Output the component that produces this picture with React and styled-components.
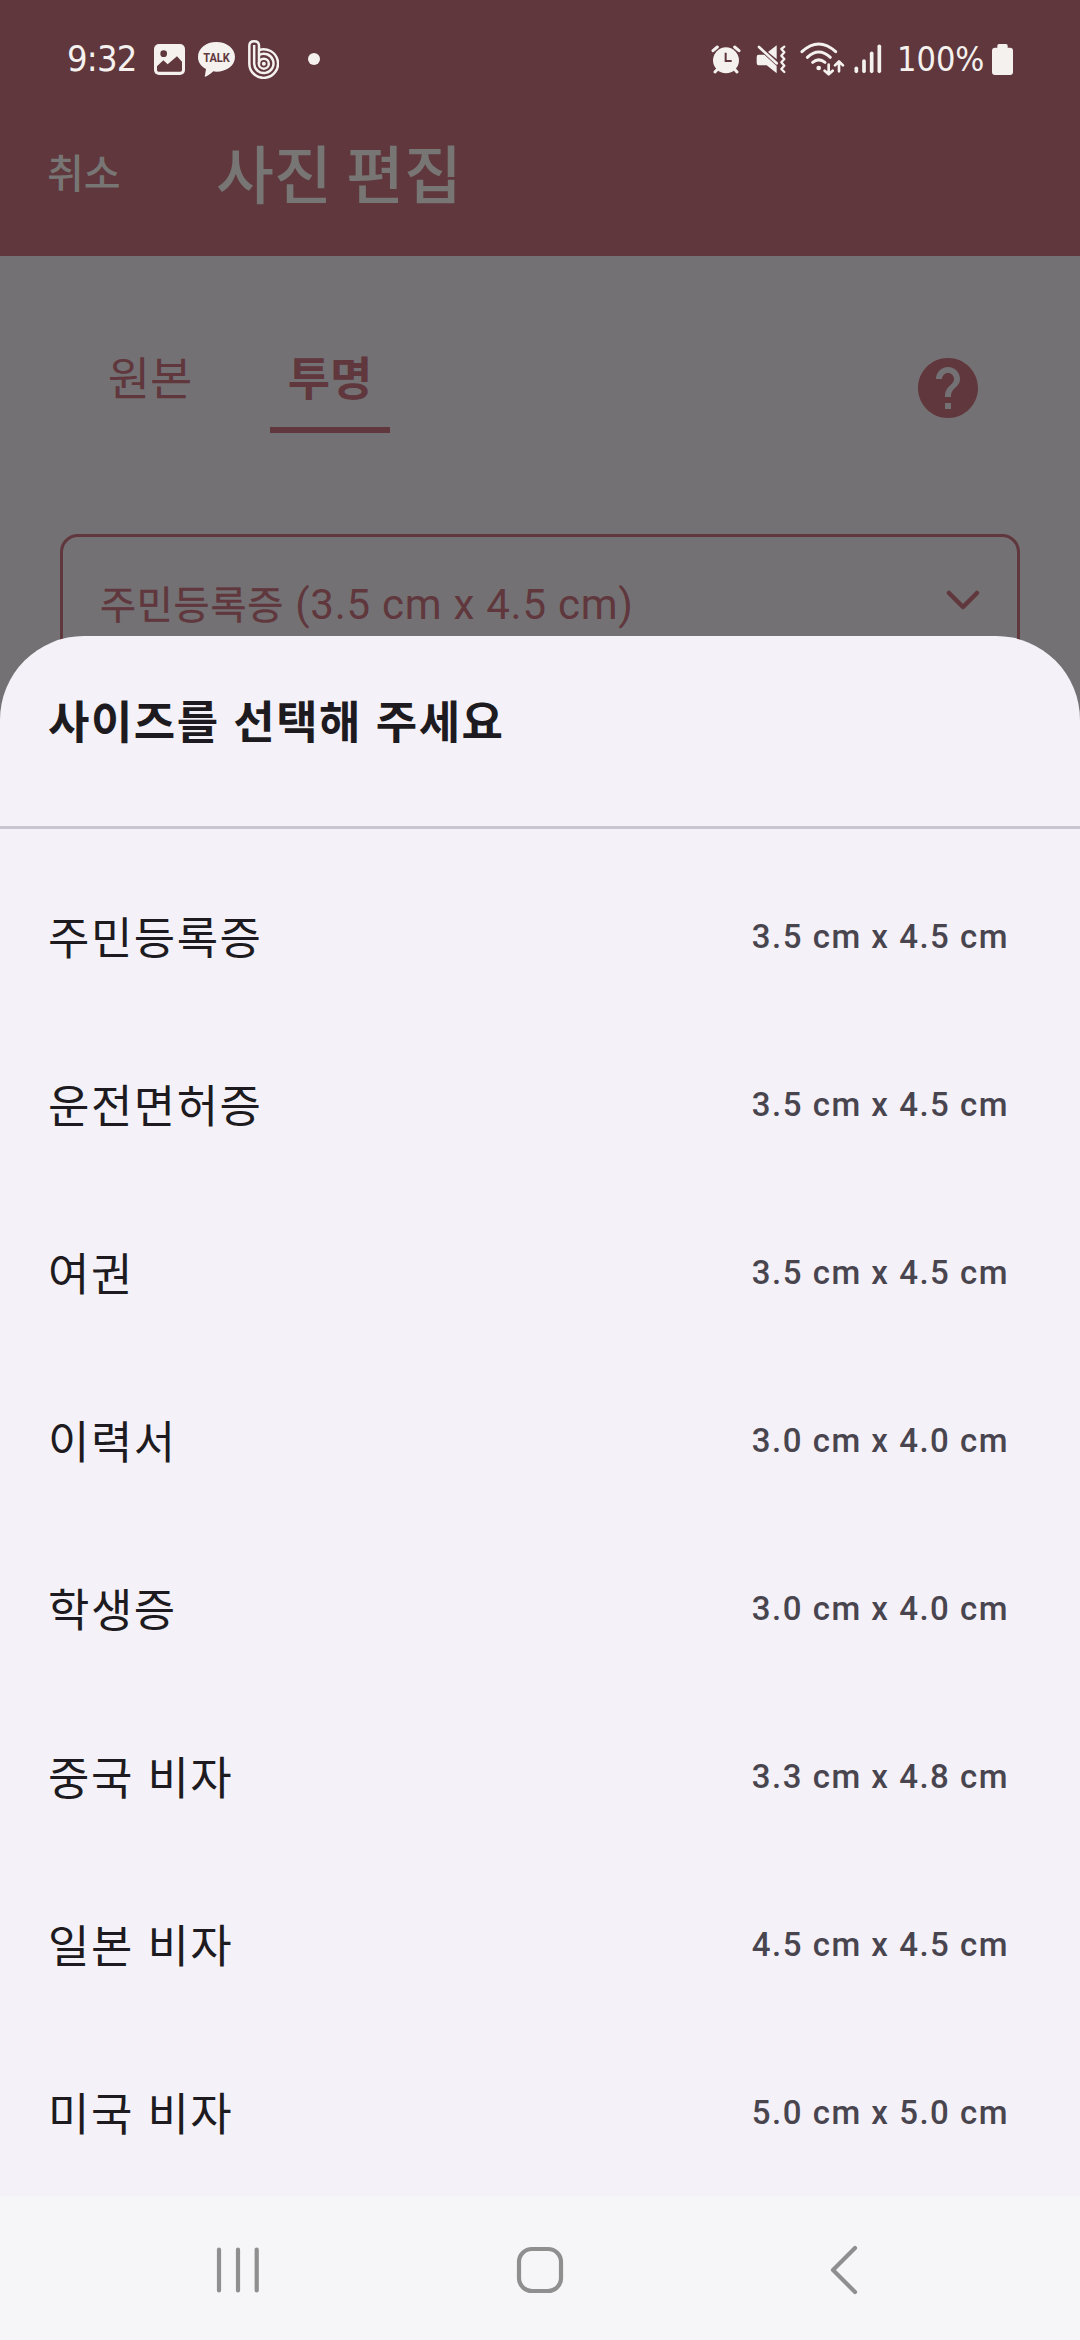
import React, { useState } from 'react';
import styled, { createGlobalStyle } from 'styled-components';

const MAROON = '#5f373c';
const LIGHT = '#f4f1ef';

const GlobalStyle = createGlobalStyle`
  body {
    margin: 0;
    background: #747174;
  }
  * {
    box-sizing: border-box;
  }
`;

const Screen = styled.div`
  position: relative;
  width: 1080px;
  height: 2340px;
  overflow: hidden;
  display: flex;
  flex-direction: column;
  background: #747174;
  font-family: Roboto, 'Noto Sans CJK KR', sans-serif;
`;

const Header = styled.header`
  height: 256px;
  background: ${MAROON};
`;

const StatusBar = styled.div`
  height: 118px;
  display: flex;
  align-items: center;
  justify-content: space-between;
  padding: 0 67px 0 67px;
`;

const StatusGroup = styled.div`
  display: flex;
  align-items: center;
  height: 40px;
`;

const StatusText = styled.span`
  width: ${(props) => props.$width}px;
  margin-right: ${(props) => props.$gap}px;
  font-family: 'DejaVu Sans Condensed', 'DejaVu Sans', sans-serif;
  font-stretch: condensed;
  font-size: ${(props) => props.$size}px;
  line-height: 40px;
  letter-spacing: ${(props) => props.$spacing || 0}px;
  white-space: nowrap;
  color: ${LIGHT};
`;

const StatusIcon = styled.svg`
  display: block;
  flex: none;
  margin-right: ${(props) => props.$gap || 0}px;
`;

const TitleBar = styled.div`
  display: flex;
  align-items: center;
  height: 105px;
  padding-left: 47px;
  color: #777674;
  font-family: 'Noto Sans CJK KR', sans-serif;
  font-weight: 500;
`;

const CancelButton = styled.button`
  width: 169px;
  padding: 0;
  border: 0;
  background: none;
  text-align: left;
  color: inherit;
  font: inherit;
  font-size: 40px;
  font-weight: 500;
  line-height: 60px;
`;

const Title = styled.h1`
  margin: 0;
  font-size: 63px;
  font-weight: 500;
  line-height: 90px;
`;

const TabRow = styled.div`
  display: flex;
  align-items: flex-start;
  height: 278px;
  padding: 77px 96px 0 90px;
`;

const Tab = styled.button`
  width: 120px;
  height: 100px;
  margin-right: 60px;
  padding: 0 0 11px;
  border: 0;
  border-bottom: 6px solid ${(props) => (props.$active ? MAROON : 'transparent')};
  background: none;
  color: ${MAROON};
  font-family: 'Noto Sans CJK KR', sans-serif;
  font-size: 46px;
  font-weight: ${(props) => (props.$active ? 700 : 400)};
  line-height: 78px;
  white-space: nowrap;
`;

const HelpButton = styled.svg`
  margin: 19px 0 0 auto;
`;

const SizeSelect = styled.div`
  display: flex;
  align-items: flex-start;
  justify-content: space-between;
  height: 144px;
  margin: 0 60px;
  padding: 35px 37px 0;
  border: 3px solid ${MAROON};
  border-radius: 18px;
  color: ${MAROON};
  font-size: 42px;
  line-height: 60px;
  letter-spacing: 0.75px;
`;

const SelectName = styled.span`
  font-family: 'Noto Sans CJK KR', sans-serif;
  font-size: 39.2px;
  -webkit-text-stroke: 0.4px currentColor;
`;

const SelectArrow = styled.svg`
  margin-top: 18px;
`;

const Sheet = styled.section`
  position: absolute;
  top: 636px;
  right: 0;
  bottom: 144px;
  left: 0;
  overflow: hidden;
  border-radius: 84px 84px 0 0;
  background: #f4f1f8;
  color: #1d1b20;
`;

const SheetTitle = styled.h2`
  height: 193px;
  margin: 0;
  padding: 51px 48px 0;
  border-bottom: 3px solid #c9c5d0;
  font-family: 'Noto Sans CJK KR', sans-serif;
  font-size: 45px;
  font-weight: 700;
  line-height: 66px;
  letter-spacing: 1.5px;
  word-spacing: 2px;
`;

const SizeList = styled.ul`
  margin: 0;
  padding: 23px 0 0;
  list-style: none;
`;

const SizeRow = styled.li`
  display: flex;
  align-items: center;
  justify-content: space-between;
  height: 168px;
  padding: 0 71px 0 48px;
`;

const SizeName = styled.span`
  font-family: 'Noto Sans CJK KR', sans-serif;
  font-size: 45px;
  line-height: 66px;
  letter-spacing: 1.5px;
  word-spacing: 2px;
`;

const SizeValue = styled.span`
  padding-top: 2px;
  color: #49454f;
  font-size: 33px;
  font-weight: 500;
  line-height: 48px;
  letter-spacing: 1.5px;
`;

const NavBar = styled.nav`
  display: flex;
  align-items: center;
  justify-content: space-between;
  height: 144px;
  margin-top: auto;
  padding: 4px 222px 0 216px;
  background: #f6f6f9;
`;

const HomeIcon = styled.svg`
  margin-right: 12px;
`;

const sizes = [
  { name: '주민등록증', size: '3.5 cm x 4.5 cm' },
  { name: '운전면허증', size: '3.5 cm x 4.5 cm' },
  { name: '여권', size: '3.5 cm x 4.5 cm' },
  { name: '이력서', size: '3.0 cm x 4.0 cm' },
  { name: '학생증', size: '3.0 cm x 4.0 cm' },
  { name: '중국 비자', size: '3.3 cm x 4.8 cm' },
  { name: '일본 비자', size: '4.5 cm x 4.5 cm' },
  { name: '미국 비자', size: '5.0 cm x 5.0 cm' },
];

const GalleryIcon = () => (
  <StatusIcon width="31" height="31" viewBox="0 0 93 93" $gap={13}>
    <rect width="93" height="93" rx="15" fill={LIGHT} />
    <circle cx="29" cy="29" r="10" fill={MAROON} />
    <path d="M9 67 L28 49 L41 61 L69 37 L84 53 V78 Q84 83 79 83 H14 Q9 83 9 78 Z" fill={MAROON} />
  </StatusIcon>
);

const TalkIcon = () => (
  <StatusIcon width="37" height="36" viewBox="0 0 111 108" $gap={13}>
    <path
      d="M55 3 C86 3 111 22 111 48 C111 74 86 92 55 92 L46 91 C38 98 30 104 22 107 Q19 108 21 103 L24 84 C9 76 0 64 0 48 C0 22 24 3 55 3 Z"
      fill={LIGHT}
    />
    <text
      x="55.5"
      y="63"
      textAnchor="middle"
      textLength="80"
      lengthAdjust="spacingAndGlyphs"
      fontFamily="Roboto, sans-serif"
      fontWeight="700"
      fontSize="37"
      fill={MAROON}
    >
      TALK
    </text>
  </StatusIcon>
);

const BandIcon = () => (
  <StatusIcon width="31" height="39" viewBox="0 0 93 117" $gap={29}>
    <g fill="none" stroke={LIGHT} strokeWidth="7.5" strokeLinecap="butt">
      <path d="M33 71 V17 Q33 4 18.5 4 Q4 4 4 17 V71 A43 43 0 1 0 33 30" />
      <path d="M18.5 15 V71 A29 29 0 1 0 33 45" />
      <circle cx="47.5" cy="71" r="15" />
    </g>
    <circle cx="47.5" cy="71" r="6" fill={LIGHT} />
  </StatusIcon>
);

const DotIcon = () => (
  <StatusIcon width="12" height="12" viewBox="0 0 12 12">
    <circle cx="6" cy="6" r="6" fill={LIGHT} />
  </StatusIcon>
);

const AlarmIcon = () => (
  <StatusIcon width="30" height="30" viewBox="0 0 90 90" $gap={15}>
    <circle cx="45" cy="49" r="39" fill={LIGHT} />
    <g stroke={LIGHT} strokeWidth="9" strokeLinecap="round">
      <path d="M6 20 L19 9" />
      <path d="M84 20 L71 9" />
      <path d="M20 75 L12 84" />
      <path d="M70 75 L78 84" />
    </g>
    <path d="M44 26 V51 H62" fill="none" stroke={MAROON} strokeWidth="6" />
  </StatusIcon>
);

const MuteIcon = () => (
  <StatusIcon width="30" height="30" viewBox="0 0 90 90" $gap={14}>
    <path d="M8 32 H25 L62 66 V88 L32 64 H8 Q2 64 2 57 V39 Q2 32 8 32 Z" fill={LIGHT} />
    <path d="M62 4 V46 L36 24 Z" fill={LIGHT} />
    <path d="M9 9 L62 58" stroke={LIGHT} strokeWidth="8" strokeLinecap="round" />
    <path
      d="M85 8 L76 15 L85 25 L76 35 L85 45 L76 55 L85 65 L76 75 L85 84"
      fill="none"
      stroke={LIGHT}
      strokeWidth="7"
      strokeLinecap="round"
      strokeLinejoin="round"
    />
  </StatusIcon>
);

const WifiIcon = () => (
  <StatusIcon width="45" height="34" viewBox="0 0 135 102" $gap={9}>
    <g fill="none" stroke={LIGHT} strokeWidth="9" strokeLinecap="round">
      <path d="M6 29 Q56 -17 107 29" />
      <path d="M22 46 Q56 14 91 46" />
      <path d="M38 61 Q56 46 75 61" />
      <path d="M86 68 V95 M74 86 L86 97 L98 86" strokeWidth="8" strokeLinejoin="round" />
      <path d="M117 88 V61 M105 70 L117 58 L129 70" strokeWidth="8" strokeLinejoin="round" />
    </g>
    <circle cx="56" cy="78" r="7" fill={LIGHT} />
  </StatusIcon>
);

const SignalIcon = () => (
  <StatusIcon width="28" height="30" viewBox="0 0 84 90" $gap={15}>
    <g stroke={LIGHT} strokeWidth="11" strokeLinecap="round">
      <path d="M7 73 V82" />
      <path d="M30 51 V82" />
      <path d="M53 28 V82" />
      <path d="M76 7 V82" />
    </g>
  </StatusIcon>
);

const BatteryIcon = () => (
  <StatusIcon width="21" height="31" viewBox="0 0 63 93">
    <rect x="16" y="0" width="31" height="20" rx="5" fill={LIGHT} />
    <rect x="0" y="11" width="63" height="82" rx="9" fill={LIGHT} />
  </StatusIcon>
);

const App = () => {
  const [tab, setTab] = useState('투명');

  return (
    <Screen>
      <GlobalStyle />
      <Header>
        <StatusBar>
          <StatusGroup>
            <StatusText $width={72} $gap={15} $size={36} $spacing={-0.8}>9:32</StatusText>
            <GalleryIcon />
            <TalkIcon />
            <BandIcon />
            <DotIcon />
          </StatusGroup>
          <StatusGroup>
            <AlarmIcon />
            <MuteIcon />
            <WifiIcon />
            <SignalIcon />
            <StatusText $width={87} $gap={8} $size={34}>100%</StatusText>
            <BatteryIcon />
          </StatusGroup>
        </StatusBar>
        <TitleBar>
          <CancelButton>취소</CancelButton>
          <Title>사진 편집</Title>
        </TitleBar>
      </Header>

      <TabRow>
        {['원본', '투명'].map((name) => (
          <Tab key={name} $active={tab === name} onClick={() => setTab(name)}>
            {name}
          </Tab>
        ))}
        <HelpButton width="72" height="72" viewBox="0 0 24 24" fill={MAROON}>
          <path d="M12 2C6.48 2 2 6.48 2 12s4.48 10 10 10 10-4.48 10-10S17.52 2 12 2zm1 17h-2v-2h2v2zm2.07-7.75l-.9.92C13.45 12.9 13 13.5 13 15h-2v-.5c0-1.1.45-2.1 1.17-2.83l1.24-1.26c.37-.36.59-.86.59-1.41 0-1.1-.9-2-2-2s-2 .9-2 2H8c0-2.21 1.79-4 4-4s4 1.79 4 4c0 .88-.36 1.68-.93 2.25z" />
        </HelpButton>
      </TabRow>

      <SizeSelect>
        <span>
          <SelectName>주민등록증</SelectName> (3.5 cm x 4.5 cm)
        </span>
        <SelectArrow width="34" height="20" viewBox="0 0 34 20" fill="none">
          <path d="M3 3 L17 17 L31 3" stroke={MAROON} strokeWidth="4.5" strokeLinecap="round" strokeLinejoin="round" />
        </SelectArrow>
      </SizeSelect>

      <Sheet>
        <SheetTitle>사이즈를 선택해 주세요</SheetTitle>
        <SizeList>
          {sizes.map((item) => (
            <SizeRow key={item.name}>
              <SizeName>{item.name}</SizeName>
              <SizeValue>{item.size}</SizeValue>
            </SizeRow>
          ))}
        </SizeList>
      </Sheet>

      <NavBar>
        <svg width="46" height="48" viewBox="0 0 46 48" stroke="#8f8f8f" strokeWidth="4.2" strokeLinecap="round">
          <path d="M3 3.5 V44.5 M22 3.5 V44.5 M40.7 3.5 V44.5" />
        </svg>
        <HomeIcon width="48" height="48" viewBox="0 0 48 48" fill="none">
          <rect x="3" y="3" width="42" height="42" rx="13" stroke="#8f8f8f" strokeWidth="4.2" />
        </HomeIcon>
        <svg width="28" height="50" viewBox="0 0 28 50" fill="none">
          <path d="M25 3 L3 25 L25 47" stroke="#8f8f8f" strokeWidth="4.2" strokeLinecap="round" strokeLinejoin="round" />
        </svg>
      </NavBar>
    </Screen>
  );
};

export default App;
